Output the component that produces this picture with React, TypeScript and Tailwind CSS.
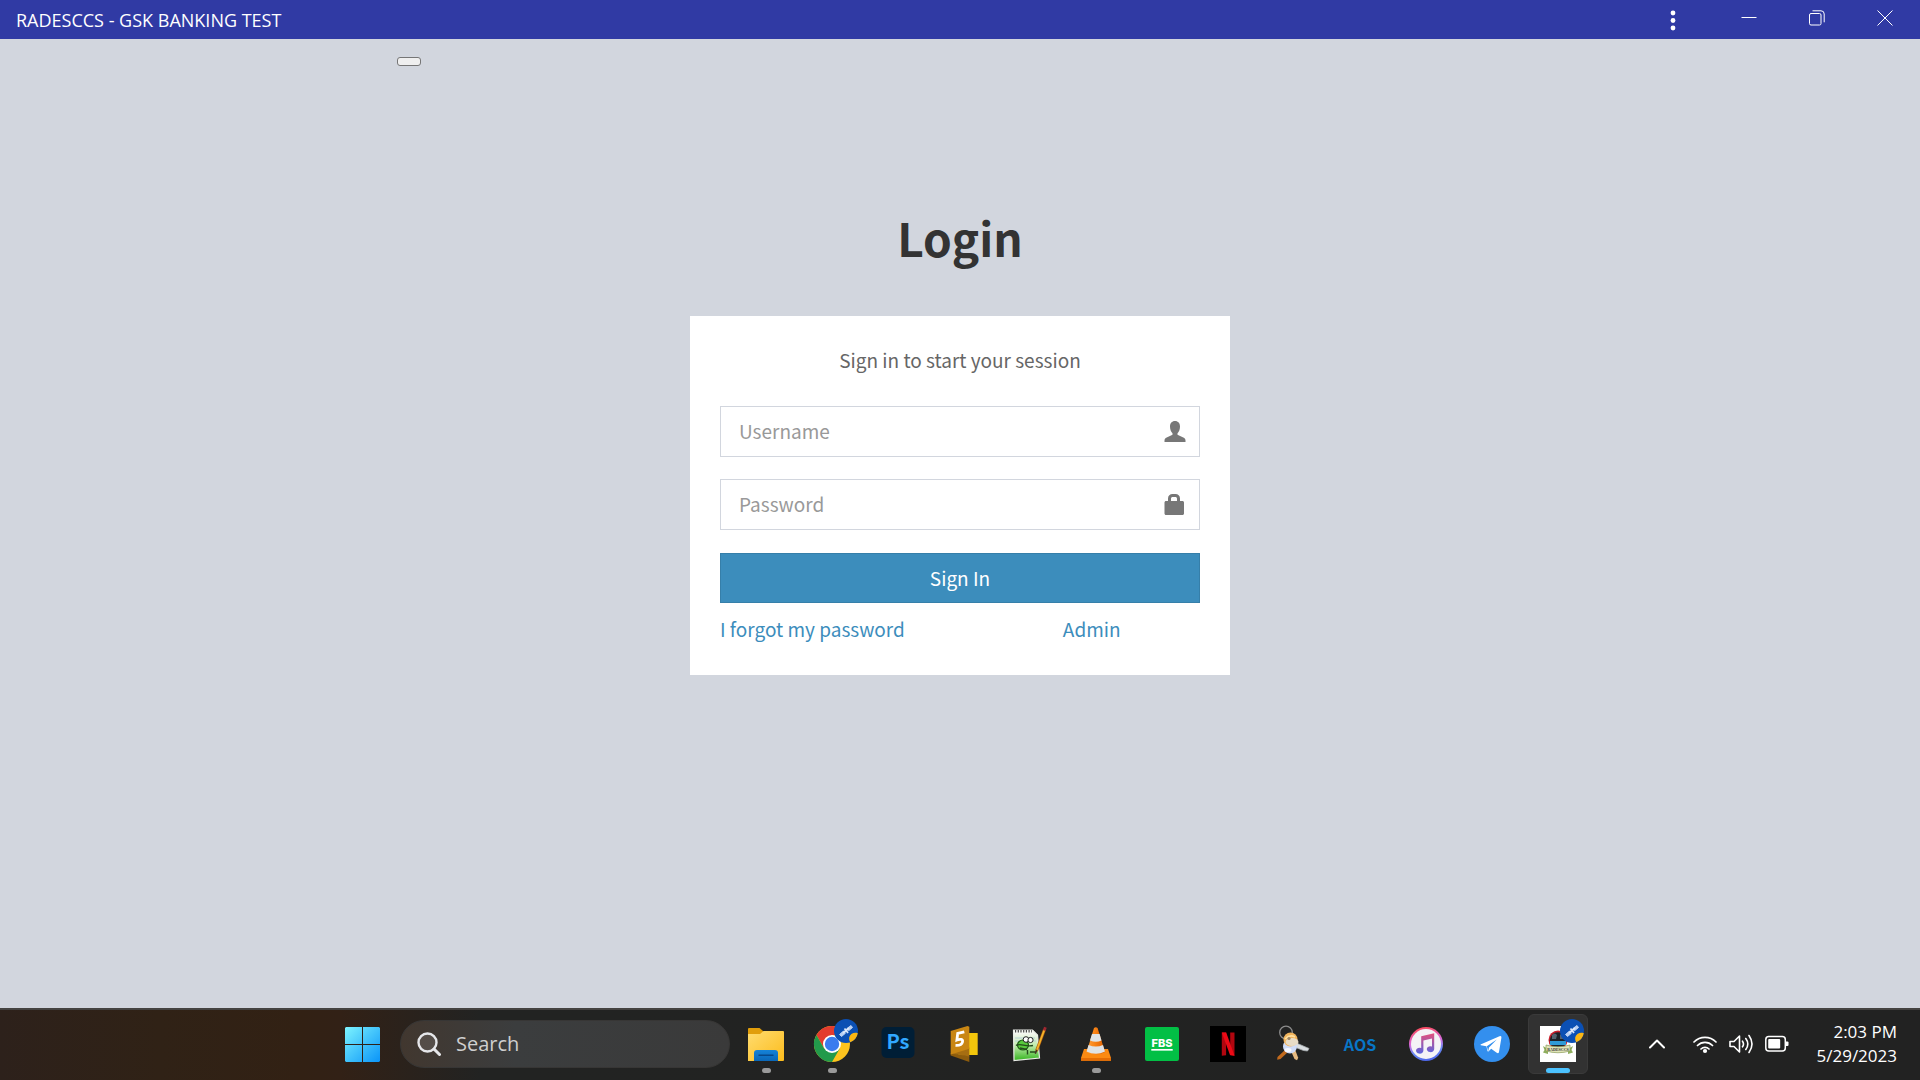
import type { ReactNode } from "react";

const FORM_FONT = "font-['Noto_Sans_CJK_SC',sans-serif]";
const SYSTEM_FONT = "font-['Open_Sans',sans-serif]";

function Icon({ children }: { children: ReactNode }) {
  return (
    <svg viewBox="0 0 36 36" className="size-9 overflow-visible" aria-hidden="true">
      {children}
    </svg>
  );
}

function Badge() {
  return (
    <g>
      <circle cx="32" cy="5" r="12" fill="#0b50b4" />
      <path d="M43.8 7.2a12 12 0 0 1-7.6 9c-1.8-3-1.4-6.300 1.200-8.200 2-1.400 4.500-1.600 6.400-.8z" fill="#fbb713" />
      <path d="M25.500 8.500l4-3.500 2 2.200-4 3.300zM33 2.500l4-3 1.500 2-3.800 3.200z" fill="#b9d0f3" stroke="#b9d0f3" strokeWidth="1" />
      <path d="M29 7l6-5M30.500 2.500l3.500 4.500" stroke="#dce8fa" strokeWidth="1.800" />
    </g>
  );
}

function FolderIcon() {
  return (
    <Icon>
      <defs>
        <linearGradient id="folder" x1="0" y1="0" x2="1" y2="1">
          <stop offset="0" stopColor="#ffdc70" />
          <stop offset="1" stopColor="#fcbc1c" />
        </linearGradient>
        <linearGradient id="folderTray" x1="0" y1="0" x2="0" y2="1">
          <stop offset="0" stopColor="#1583d8" />
          <stop offset="1" stopColor="#0a67b8" />
        </linearGradient>
      </defs>
      <path d="M0 3a1 1 0 0 1 1-1h10.500l3.500 3v4H0z" fill="#e19e0b" />
      <path d="M0 8h12l3.500-3H35a1 1 0 0 1 1 1v28a1 1 0 0 1-1 1H0z" fill="url(#folder)" />
      <path d="M6 35v-8a3 3 0 0 1 3-3h18a3 3 0 0 1 3 3v8z" fill="url(#folderTray)" />
      <path d="M11 29.300h14" stroke="#07488a" strokeWidth="1.400" strokeLinecap="round" />
    </Icon>
  );
}

function ChromeIcon() {
  return (
    <Icon>
      <circle cx="18" cy="18" r="18" fill="#fcc31e" />
      <path d="M2.410 9A18 18 0 0 1 33.590 9H18L10.200 22.500z" fill="#e33b2e" />
      <path d="M2.410 9A18 18 0 0 0 18 36l7.800-13.500L10.200 22.500z" fill="#229a4b" />
      <circle cx="18" cy="18" r="9" fill="#fff" />
      <circle cx="18" cy="18" r="7.200" fill="#3a7cee" />
      <Badge />
    </Icon>
  );
}

function PhotoshopIcon() {
  return (
    <Icon>
      <rect x="1.500" y="1" width="33" height="31" rx="5" fill="#001e36" />
      <text x="18" y="23" textAnchor="middle" fontSize="20" fontWeight="700" fill="#31a8ff" className={FORM_FONT}>Ps</text>
    </Icon>
  );
}

function SublimeIcon() {
  return (
    <Icon>
      <path d="M22 7h9.700v22H12z" fill="#f3c60c" />
      <path d="M4.700 27l18.600 3v6L4.700 29.500z" fill="#8d5c0d" />
      <path d="M4.700 27.500l18.600-6v9L12 28.500z" fill="#a66e12" />
      <path d="M4.700 5L21.500 0l1.800.8v22L4.700 28.500z" fill="#c98613" />
      <path d="M18.300 5.800l-6.600 1.600-.8 6.600c3-1.200 6.300-1 5.600 2-.7 2.800-3.600 3.600-7 3.400" fill="none" stroke="#fff" strokeWidth="2.800" />
    </Icon>
  );
}

function NotepadIcon() {
  return (
    <Icon>
      <defs>
        <linearGradient id="notepad" x1="0" y1="0" x2="0" y2="1">
          <stop offset=".1" stopColor="#f5f7f2" />
          <stop offset=".5" stopColor="#c2ecae" />
          <stop offset="1" stopColor="#35b51f" />
        </linearGradient>
      </defs>
      <path d="M1.500 4h19l5 5 2 23-25.500 2.500z" fill="url(#notepad)" stroke="#e9ece7" strokeWidth="1.200" />
      <path d="M3 5.300h17" stroke="#4a4a4a" strokeWidth="2.400" strokeDasharray="1.200 1.500" />
      <path d="M3 12h20M3 15h21" stroke="#aac6d6" strokeWidth=".8" />
      <ellipse cx="11" cy="19" rx="5.500" ry="5" fill="#58c93c" stroke="#1d5c14" strokeWidth="1.200" />
      <circle cx="14" cy="13.500" r="2.800" fill="#fff" stroke="#222" />
      <circle cx="18.500" cy="14" r="2.600" fill="#fff" stroke="#222" />
      <path d="M4 19.500c5-3 9 2 17 0M8 22l7 1.500M15.500 24v4.500M18 26h6" fill="none" stroke="#244b1c" strokeWidth="1.400" />
      <path d="M32.500 3.500L24.500 25" stroke="#a85a10" strokeWidth="3" />
      <path d="M32.500 3.500L24.500 25" stroke="#f5b429" strokeWidth="1.800" />
      <path d="M33.400 1.200l-1.200 3.200" stroke="#9f2730" strokeWidth="2.800" />
      <path d="M24.900 23.800l-1.600 4" stroke="#453424" strokeWidth="1.500" />
    </Icon>
  );
}

function VlcIcon() {
  return (
    <Icon>
      <defs>
        <linearGradient id="cone" x1="0" x2="1" y1="0" y2="0">
          <stop offset="0" stopColor="#ffa23c" />
          <stop offset=".5" stopColor="#f77f12" />
          <stop offset="1" stopColor="#d85f04" />
        </linearGradient>
      </defs>
      <path d="M6 23h24l3 9v2.700H3V32z" fill="#fb8a13" />
      <path d="M3 32h30v2.700H3z" fill="#e56d05" />
      <path d="M16 2q1.800-1.400 3.600 0l7.400 24q-9 5-18.400 0z" fill="url(#cone)" />
      <path d="M14 8h7.600l1.900 6.500q-5.500 2.500-11.500 0z" fill="#dfe3e6" />
      <path d="M10.500 19q7.400 3 14.500 0l2 6.500q-9 4.500-18.400 0z" fill="#dfe3e6" />
    </Icon>
  );
}

function FbsIcon() {
  return (
    <Icon>
      <rect x="1" y="1" width="34" height="34" rx="2" fill="#02bf45" />
      <text x="18" y="20.500" textAnchor="middle" fontSize="11" fontWeight="800" fill="#fff" className="font-['Inter',sans-serif]">FBS</text>
      <path d="M7.300 23.800h21.400" stroke="#fff" strokeWidth="1.700" />
    </Icon>
  );
}

function NetflixIcon() {
  return (
    <Icon>
      <path d="M0 0h36v36H0z" fill="#000" />
      <path d="M11.800 6.500h4.300v22.700l-4.300.5zM20.200 6.500h4.300v23.200l-4.300-.5z" fill="#b1060f" />
      <path d="M11.800 6.500h4.400l8.300 23.200-4.500-.6z" fill="#ec0a16" />
    </Icon>
  );
}

function KeysIcon() {
  return (
    <Icon>
      <circle cx="10" cy="6.500" r="6.300" fill="none" stroke="#8c8c8c" strokeWidth="1.300" />
      <path d="M18 16l15 6.500-1.500 2.500-4-.5-9-3.500z" fill="#d9dde0" stroke="#aab0b4" strokeWidth=".8" />
      <path d="M10 23L1.500 31l-.3 2.800 3.300-.8 8.500-8z" fill="#c26a1d" />
      <path d="M15 25l3.500 8 2.500 1.200 1.200-2.500L18.500 22z" fill="#e6ba82" />
      <circle cx="14" cy="20.500" r="7" fill="#cfdcf8" />
      <circle cx="14.500" cy="13.500" r="7" fill="#f0b35c" />
      <ellipse cx="16" cy="16" rx="6.500" ry="4" fill="#e8dcc6" />
      <path d="M9 13q5-5 10-2" fill="none" stroke="#ffe0a0" strokeWidth="1.600" />
      <circle cx="13" cy="12.500" r="1.600" fill="#9c8565" />
      <ellipse cx="12" cy="24" rx="3.500" ry="2" fill="#f5f7ff" />
    </Icon>
  );
}

function AosIcon() {
  return (
    <Icon>
      <text x="18" y="25" textAnchor="middle" fontSize="16" fontWeight="700" fill="#0876c6" className={FORM_FONT}>AOS</text>
    </Icon>
  );
}

function MusicIcon() {
  return (
    <Icon>
      <defs>
        <linearGradient id="musicRing" x1=".4" y1="0" x2=".6" y2="1">
          <stop offset="0" stopColor="#fb4a5c" />
          <stop offset=".45" stopColor="#d76be0" />
          <stop offset=".7" stopColor="#6b8cf5" />
          <stop offset="1" stopColor="#4b63e8" />
        </linearGradient>
        <linearGradient id="musicNote" x1="0" y1="0" x2="0" y2="1">
          <stop offset="0" stopColor="#e4507c" />
          <stop offset="1" stopColor="#5a63de" />
        </linearGradient>
      </defs>
      <circle cx="18" cy="18" r="17" fill="url(#musicRing)" />
      <circle cx="18" cy="18" r="15" fill="#f4f3f6" />
      <path d="M13.200 10.300l13-3v15.800a3.700 3 0 1 1-2.200-2.700v-8l-8.600 2v10.200a3.700 3 0 1 1-2.200-2.700z" fill="url(#musicNote)" />
    </Icon>
  );
}

function TelegramIcon() {
  return (
    <Icon>
      <circle cx="18" cy="18" r="18" fill="#338fee" />
      <path d="M6.500 18.500L25.500 10.200q2.200-.8 1.900 1.500L25 26q-.5 2-2.300.8l-5.500-4-2.800 2.600q-.8.500-1-.6l-1-4.600-5.600-1z" fill="#fff" />
      <path d="M12.800 20.200l10-6.700-7.800 7.900-.8 3.800z" fill="#338fee" />
    </Icon>
  );
}

function BankingIcon() {
  return (
    <Icon>
      <path d="M0 0h36v36H0z" fill="#fff" />
      <circle cx="18" cy="14" r="9.500" fill="#c81f2c" />
      <circle cx="18" cy="14.500" r="8.300" fill="#1c2228" />
      <path d="M10 15h16v4H10z" fill="#2f9bd6" />
      <path d="M12 9q3-3 5 0l-1 4h-4zM20 9q3-3 5 1l-1 3h-4z" fill="#52626e" />
      <path d="M3 20l5 3v5l-5-1.500 1.500-2.500zM33 20l-5 3v5l5-1.500-1.500-2.500z" fill="#8eae5d" />
      <path d="M6 19q12 3.500 24 0v6q-12 3.500-24 0z" fill="#e1e5b9" stroke="#8a9b58" strokeWidth=".7" />
      <text x="18" y="24.800" textAnchor="middle" fontSize="4" fontWeight="700" fill="#333" className="font-['Liberation_Serif',serif]">RADESCCS</text>
      <Badge />
    </Icon>
  );
}

const apps: { name: string; icon: ReactNode; state?: "open" | "active" }[] = [
  { name: "File Explorer", icon: <FolderIcon />, state: "open" },
  { name: "Google Chrome", icon: <ChromeIcon />, state: "open" },
  { name: "Photoshop", icon: <PhotoshopIcon /> },
  { name: "Sublime Text", icon: <SublimeIcon /> },
  { name: "Notepad++", icon: <NotepadIcon /> },
  { name: "VLC media player", icon: <VlcIcon />, state: "open" },
  { name: "FBS", icon: <FbsIcon /> },
  { name: "Netflix", icon: <NetflixIcon /> },
  { name: "Keys", icon: <KeysIcon /> },
  { name: "AOS", icon: <AosIcon /> },
  { name: "iTunes", icon: <MusicIcon /> },
  { name: "Telegram", icon: <TelegramIcon /> },
  { name: "RADESCCS", icon: <BankingIcon />, state: "active" },
];

function TitleBar() {
  return (
    <header className={`flex h-[39px] items-center justify-between bg-[#303aa4] pr-px pl-4 text-white ${SYSTEM_FONT}`}>
      <h1 className="text-[18px] leading-6">RADESCCS - GSK BANKING TEST</h1>
      <div className="flex h-full items-center">
        <button type="button" aria-label="More options" className="flex h-full w-10 items-center justify-center">
          <svg viewBox="0 0 20 24" className="h-6 w-5" fill="currentColor">
            <circle cx="10" cy="5" r="2.400" />
            <circle cx="10" cy="12.500" r="2.400" />
            <circle cx="10" cy="20" r="2.400" />
          </svg>
        </button>
        <div className="flex h-full items-start pl-[22px]">
          {[
            { label: "Minimize", shape: <path d="M.5 7.500h15" /> },
            {
              label: "Restore",
              shape: (
                <>
                  <rect x=".5" y="3.500" width="11.500" height="11.500" rx="1.500" />
                  <path d="M3.500.8h8.500a3.200 3.200 0 0 1 3.200 3.200v8.300" />
                </>
              ),
            },
            { label: "Close", shape: <path d="M.5.500l15 15M15.500.500l-15 15" /> },
          ].map((control) => (
            <button key={control.label} type="button" aria-label={control.label} className="flex h-[35px] w-[68px] items-center justify-center">
              <svg viewBox="0 0 16 16" className="size-4" fill="none" stroke="currentColor">
                {control.shape}
              </svg>
            </button>
          ))}
        </div>
      </div>
    </header>
  );
}

function Field({ label, type, children }: { label: string; type: string; children: ReactNode }) {
  return (
    <div className="relative">
      <input
        type={type}
        aria-label={label}
        placeholder={label}
        className="block h-[51px] w-full border border-[#d2d6de] bg-white pr-14 pb-0.5 pl-[18px] text-[19px] text-[#555] placeholder:text-[#999] placeholder:opacity-100"
      />
      <svg viewBox="0 0 22 22" className="pointer-events-none absolute top-[14px] right-[14px] size-[22px]" fill="#777" aria-hidden="true">
        {children}
      </svg>
    </div>
  );
}

function LoginForm() {
  return (
    <form className="bg-white px-[30px] pt-7 pb-[30px]" onSubmit={(event) => event.preventDefault()}>
      <p className="text-center text-[19px] leading-8 text-[#666]">Sign in to start your session</p>
      <div className="mt-[30px] flex flex-col gap-[22px]">
        <Field label="Username" type="text">
          <path d="M11 1c3.200 0 5 2.300 5 5.500 0 3-1 5.300-2.500 6.800v1.500l5.800 2.800c1.500.7 2.200 1.500 2.200 2.900V22H.5v-1.500c0-1.400.7-2.200 2.200-2.900l5.800-2.800v-1.500C7 11.800 6 9.500 6 6.500 6 3.300 7.800 1 11 1z" />
        </Field>
        <Field label="Password" type="password">
          <path fillRule="evenodd" d="M4 8V5.500C4 2.700 6 1 8.500 1h3C14 1 16 2.700 16 5.500V8h2.500c.8 0 1.500.7 1.500 1.500v11c0 .8-.7 1.500-1.500 1.500H2c-.8 0-1.500-.7-1.500-1.500v-11C.5 8.700 1.200 8 2 8zm3 0h6V5.800C13 4.600 12.300 4 11.300 4H8.700C7.700 4 7 4.600 7 5.800z" />
        </Field>
      </div>
      <button type="submit" className="mt-[23px] h-[50px] w-full border border-[#367fa9] bg-[#3c8dbc] text-[19px] text-white">
        Sign In
      </button>
      <div className="mt-2.5 grid grid-cols-[5fr_2fr] text-[19px] leading-8 text-[#3c8dbc]">
        <a href="#forgot" className="justify-self-start">I forgot my password</a>
        <a href="#admin" className="justify-self-start">Admin</a>
      </div>
    </form>
  );
}

function Tray() {
  return (
    <div className="flex items-center justify-end pr-[23px] text-white">
      <button type="button" aria-label="Show hidden icons" className="mr-7">
        <svg viewBox="0 0 16 10" className="h-2.5 w-4" fill="none" stroke="currentColor" strokeWidth="2" strokeLinecap="round" strokeLinejoin="round">
          <path d="M1 8.500l7-7 7 7" />
        </svg>
      </button>
      <button type="button" aria-label="Network, volume and battery" className="mr-[27px] flex items-center gap-3">
        <svg viewBox="0 0 24 20" className="h-5 w-6" fill="none" stroke="currentColor" strokeWidth="1.700" strokeLinecap="round">
          <path d="M1 8a15.500 15.500 0 0 1 22 0M4.500 11.500a10.600 10.600 0 0 1 15 0M8 15a5.700 5.700 0 0 1 8 0" />
          <circle cx="12" cy="17" r="2.100" fill="currentColor" stroke="none" />
        </svg>
        <svg viewBox="0 0 24 20" className="h-5 w-6" fill="none" stroke="currentColor" strokeWidth="1.600" strokeLinecap="round" strokeLinejoin="round">
          <path d="M1 7.500v5h4l5.500 5.500V2L5 7.500zM13.500 7.200q2 2.800 0 5.600M16.800 4.500q4 5.500 0 11M20 1.500q6 8.500 0 17" />
        </svg>
        <svg viewBox="0 0 24 20" className="h-5 w-6" fill="none" stroke="currentColor" strokeWidth="1.500">
          <rect x=".8" y="2.500" width="19.500" height="14.500" rx="3" />
          <rect x="3.200" y="5" width="12" height="9.500" rx="1" fill="currentColor" stroke="none" />
          <path d="M21 7.500h1.500a1 1 0 0 1 1 1v2.500a1 1 0 0 1-1 1H21z" fill="currentColor" stroke="none" />
        </svg>
      </button>
      <time dateTime="2023-05-29T14:03" className={`flex flex-col text-right text-[17px] leading-6 ${SYSTEM_FONT}`}>
        <span>2:03 PM</span>
        <span>5/29/2023</span>
      </time>
    </div>
  );
}

function Taskbar() {
  return (
    <footer className="grid h-[72px] grid-cols-[1fr_auto_1fr] items-center border-t-2 border-[#454341] bg-[linear-gradient(90deg,#2d211b_0px,#302216_160px,#322114_300px,#322116_340px,#222322_480px,#222222_100%)] pb-0.5">
      <div />
      <div className="flex items-center gap-1.5">
        <button type="button" aria-label="Start" className="mr-0.5 flex size-[60px] items-center justify-center">
          <svg viewBox="0 0 35 35" className="size-[35px]">
            <defs>
              <linearGradient id="start" gradientUnits="userSpaceOnUse" x1="0" y1="0" x2="35" y2="35">
                <stop offset="0" stopColor="#7df4ff" />
                <stop offset=".5" stopColor="#42c3fb" />
                <stop offset="1" stopColor="#0a94f8" />
              </linearGradient>
            </defs>
            <path d="M1 0h16v17H0V1zM18 0h16l1 1v16H18zM0 18h17v17H1l-1-1zM18 18h17v16l-1 1H18z" fill="url(#start)" />
          </svg>
        </button>
        <div className="flex h-12 w-[330px] items-center rounded-full border border-[#373635] bg-[linear-gradient(90deg,#41372f,#3b3d3e_35%,#3a3a3a)] pl-4">
          <svg viewBox="0 0 24 24" className="mr-[15px] size-6 shrink-0" fill="none" stroke="#e6e7ea" strokeWidth="2.400" strokeLinecap="round" aria-hidden="true">
            <circle cx="10.500" cy="10.500" r="9" fill="#ffffff1c" />
            <path d="M17 17l5.500 5.500" strokeWidth="3" />
          </svg>
          <input type="search" aria-label="Search" placeholder="Search" className={`mr-6 w-full min-w-0 bg-transparent text-[20px] text-white outline-none placeholder:text-[#cfcfcf] placeholder:opacity-100 ${SYSTEM_FONT}`} />
        </div>
        {apps.map((app) => (
          <button
            key={app.name}
            type="button"
            aria-label={app.name}
            className={`relative flex size-[60px] items-center justify-center rounded-md ${app.state === "active" ? "border border-[#3a3a3a] bg-[#323232]" : ""}`}
          >
            {app.icon}
            {app.state === "open" && <span className="absolute bottom-px h-[5px] w-[9px] rounded-full bg-[#9a9a9a]" />}
            {app.state === "active" && <span className="absolute bottom-0 h-[5px] w-6 rounded-full bg-[#4cc2ff]" />}
          </button>
        ))}
      </div>
      <Tray />
    </footer>
  );
}

export default function App() {
  return (
    <div className="flex min-h-screen flex-col bg-[#d2d6de]">
      <TitleBar />
      <main className={`flex-1 ${FORM_FONT}`}>
        <div className="mx-auto flex max-w-[1126px] pt-[18px]">
          <button type="button" aria-label="Toggle navigation" className="h-[9px] w-6 rounded-[3px] border border-[#767676] bg-[#efefef]" />
        </div>
        <section className="mx-auto mt-[134px] w-full max-w-[540px]">
          <h2 className="mb-[42px] text-center text-[46px] leading-[74px] font-bold text-[#333]">Login</h2>
          <LoginForm />
        </section>
      </main>
      <Taskbar />
    </div>
  );
}
